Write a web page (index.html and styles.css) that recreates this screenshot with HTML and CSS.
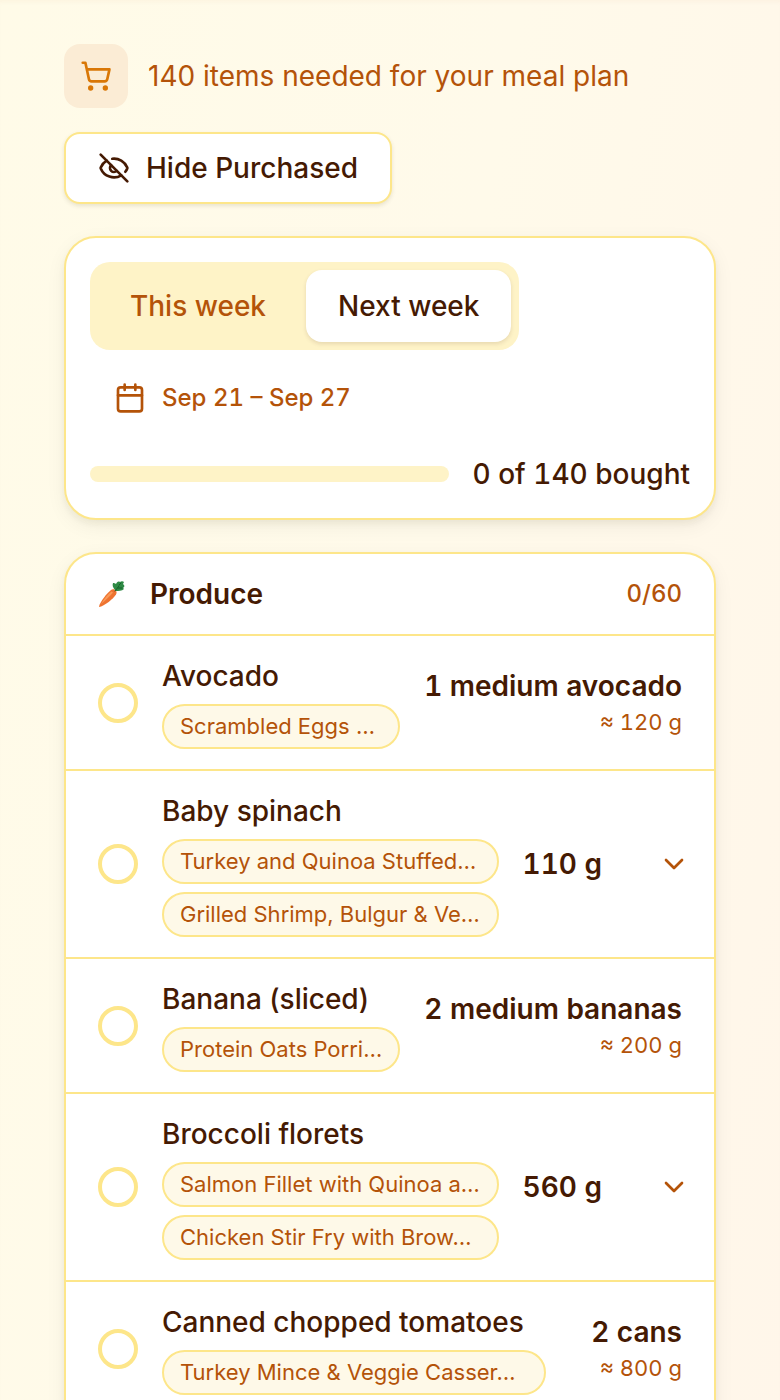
FILE: index.html
```html
<!DOCTYPE html>
<html lang="en">

<head>
  <meta charset="utf-8">
  <meta name="viewport" content="width=device-width, initial-scale=1">
  <title>Shopping list</title>
  <link rel="stylesheet" href="styles.css">
</head>

<body>
  <main class="page">
    <header class="intro">
      <span class="intro-icon">
        <svg class="icon" viewBox="0 0 24 24" aria-hidden="true">
          <circle cx="8" cy="21" r="1" />
          <circle cx="19" cy="21" r="1" />
          <path d="M2.05 2.05h2l2.66 12.42a2 2 0 0 0 2 1.58h9.78a2 2 0 0 0 1.95-1.57l1.65-7.43H5.12" />
        </svg>
      </span>
      <p>140 items needed for your meal plan</p>
    </header>

    <button class="hide-btn" type="button">
      <svg class="icon" viewBox="0 0 24 24" aria-hidden="true">
        <path d="M10.733 5.076a10.744 10.744 0 0 1 11.205 6.575 1 1 0 0 1 0 .696 10.747 10.747 0 0 1-1.444 2.49" />
        <path d="M14.084 14.158a3 3 0 0 1-4.242-4.242" />
        <path d="M17.479 17.499a10.75 10.75 0 0 1-15.417-5.151 1 1 0 0 1 0-.696 10.75 10.75 0 0 1 4.446-5.143" />
        <path d="m2 2 20 20" />
      </svg>
      Hide Purchased
    </button>

    <section class="card week-card">
      <div class="tabs">
        <button class="tab" type="button">This week</button>
        <button class="tab active" type="button">Next week</button>
      </div>
      <div class="dates">
        <svg class="icon" viewBox="0 0 24 24" aria-hidden="true">
          <path d="M8 2v4M16 2v4M3 10h18" />
          <rect x="3" y="4" width="18" height="18" rx="2" />
        </svg>
        <span>Sep 21 – Sep 27</span>
      </div>
      <div class="progress-row">
        <div class="progress" role="progressbar" aria-label="Items bought" aria-valuemin="0" aria-valuemax="140" aria-valuenow="0"></div>
        <span>0 of 140 bought</span>
      </div>
    </section>

    <section class="card list-card">
      <div class="group-head">
        <svg class="carrot" viewBox="0 0 28 28" aria-hidden="true">
          <path d="M1 26.500C2 22 9 13 13 10c3-2 7 1 5 4.500C15 19 7 25.500 1.500 27z" fill="#ee7330" />
          <path d="M3 24C6 19 10 14 13.500 11.500l1.500 1C12 16 8 20 3 24z" fill="#fa9a58" />
          <path d="M17 10c-2-2-3-5-2-7 1 0 2 0 3 1 1-2 2-3 4-2 1-1 3-1 4 0l-1 2c1 1 2 2 1 3-1 1-1 1 0 2-2 2-6 2-8 2z" fill="#2f8a45" />
          <path d="M17 11l4-5M21 5l2-2M20 8l4 0" stroke="#17622a" stroke-linecap="round" />
        </svg>
        <h2>Produce</h2>
        <span class="count">0/60</span>
      </div>

      <ul class="items">
        <li class="item">
          <input type="checkbox" id="avocado">
          <div class="info">
            <label for="avocado">Avocado</label>
            <span class="chip">Scrambled Eggs …</span>
          </div>
          <div class="amount">
            <strong>1 medium avocado</strong>
            <small>≈ 120 g</small>
          </div>
        </li>

        <li class="item">
          <input type="checkbox" id="spinach">
          <div class="info">
            <label for="spinach">Baby spinach</label>
            <span class="chip">Turkey and Quinoa Stuffed…</span>
            <span class="chip">Grilled Shrimp, Bulgur &amp; Ve…</span>
          </div>
          <div class="amount">
            <strong>110 g</strong>
          </div>
          <button class="expand" type="button" aria-label="Show details">
            <svg class="icon" viewBox="0 0 24 24" aria-hidden="true">
              <path d="m6 9 6 6 6-6" />
            </svg>
          </button>
        </li>

        <li class="item">
          <input type="checkbox" id="banana">
          <div class="info">
            <label for="banana">Banana (sliced)</label>
            <span class="chip">Protein Oats Porri…</span>
          </div>
          <div class="amount">
            <strong>2 medium bananas</strong>
            <small>≈ 200 g</small>
          </div>
        </li>

        <li class="item">
          <input type="checkbox" id="broccoli">
          <div class="info">
            <label for="broccoli">Broccoli florets</label>
            <span class="chip">Salmon Fillet with Quinoa a…</span>
            <span class="chip">Chicken Stir Fry with Brow…</span>
          </div>
          <div class="amount">
            <strong>560 g</strong>
          </div>
          <button class="expand" type="button" aria-label="Show details">
            <svg class="icon" viewBox="0 0 24 24" aria-hidden="true">
              <path d="m6 9 6 6 6-6" />
            </svg>
          </button>
        </li>

        <li class="item">
          <input type="checkbox" id="tomatoes">
          <div class="info">
            <label for="tomatoes">Canned chopped tomatoes</label>
            <span class="chip">Turkey Mince &amp; Veggie Casser…</span>
          </div>
          <div class="amount">
            <strong>2 cans</strong>
            <small>≈ 800 g</small>
          </div>
        </li>
      </ul>
    </section>
  </main>
</body>

</html>
```
FILE: styles.css
```css
* {
  box-sizing: border-box;
}

body {
  margin: 0;
  font-family: Inter, sans-serif;
  font-size: 28px;
  line-height: 40px;
  color: #451a03;
  background: linear-gradient(100deg, #fffbe8, #fffaea 50%, #fff6ea);
}

button {
  font: inherit;
  font-weight: 500;
  color: inherit;
  cursor: pointer;
}

.icon {
  width: 32px;
  height: 32px;
  flex-shrink: 0;
  fill: none;
  stroke: currentColor;
  stroke-width: 2;
  stroke-linecap: round;
  stroke-linejoin: round;
}

.page {
  display: flex;
  flex-direction: column;
  align-items: flex-start;
  gap: 32px;
  padding: 44px 64px;
  box-shadow: inset 0 4px 4px -2px rgba(180, 83, 9, 0.04);
}

.intro {
  display: flex;
  align-items: center;
  gap: 20px;
  margin-bottom: -8px;
  color: #b45309;
}

.intro p {
  margin: 0;
}

.intro-icon {
  display: flex;
  align-items: center;
  justify-content: center;
  width: 64px;
  height: 64px;
  border-radius: 16px;
  background: #fbecd5;
  color: #d97706;
}

.hide-btn {
  display: flex;
  align-items: center;
  gap: 16px;
  padding: 14px 32px;
  border: 2px solid #fde68a;
  border-radius: 16px;
  background: #fff;
  box-shadow: 0 2px 4px rgba(69, 60, 3, 0.12);
}

.card {
  width: 100%;
  border: 2px solid #fde68a;
  border-radius: 32px;
  background: #fff;
  box-shadow: 0 4px 6px rgba(40, 40, 20, 0.05), 0 6px 20px rgba(40, 40, 20, 0.06);
}

.week-card {
  padding: 24px;
}

.list-card {
  padding-bottom: 32px;
}

.tabs {
  display: flex;
  gap: 8px;
  width: fit-content;
  padding: 8px;
  border-radius: 20px;
  background: #fef3c7;
}

.tab {
  padding: 16px 32px;
  border: none;
  border-radius: 16px;
  background: none;
  color: #b45309;
}

.tab.active {
  background: #fff;
  color: #451a03;
  box-shadow: 0 2px 4px rgba(69, 26, 3, 0.12);
}

.dates {
  display: flex;
  align-items: center;
  gap: 16px;
  height: 64px;
  margin: 16px 0 24px;
  padding: 0 24px;
  font-size: 24px;
  font-weight: 500;
  font-variant-numeric: tabular-nums;
  color: #b45309;
}

.progress-row {
  display: flex;
  align-items: center;
  gap: 24px;
  font-weight: 500;
  font-variant-numeric: tabular-nums;
}

.progress {
  flex: 1;
  height: 16px;
  border-radius: 8px;
  background: #fef3c7;
}

.group-head {
  display: flex;
  align-items: center;
  gap: 24px;
  padding: 20px 32px;
}

.group-head h2 {
  flex: 1;
  margin: 0;
  font-size: 28px;
  font-weight: 600;
}

.carrot {
  width: 28px;
  height: 28px;
  fill: none;
}

.count {
  font-size: 24px;
  font-weight: 500;
  font-variant-numeric: tabular-nums;
  color: #b45309;
}

.items {
  margin: 0;
  padding: 0;
  list-style: none;
}

.item {
  display: flex;
  align-items: center;
  gap: 24px;
  padding: 20px 32px;
  border-top: 2px solid #fde68a;
}

.item input {
  appearance: none;
  flex-shrink: 0;
  width: 40px;
  height: 40px;
  margin: 0;
  border: 4px solid #fde68a;
  border-radius: 50%;
}

.item input:checked {
  background: #fde68a;
}

.info {
  flex: 1;
  display: flex;
  flex-direction: column;
  gap: 8px;
  min-width: 0;
}

.info label {
  font-weight: 500;
}

.chip {
  max-width: 384px;
  padding: 4px 16px;
  border: 2px solid #fde68a;
  border-radius: 24px;
  background: #fef9e8;
  color: #b45309;
  font-size: 22px;
  line-height: 33px;
  white-space: nowrap;
  overflow: hidden;
}

.amount {
  display: flex;
  flex-direction: column;
  align-items: flex-end;
  white-space: nowrap;
  font-variant-numeric: tabular-nums;
}

.amount strong {
  font-weight: 600;
}

.amount small {
  font-size: 22px;
  line-height: 33px;
  color: #b45309;
}

.expand {
  display: flex;
  align-items: center;
  justify-content: center;
  width: 64px;
  height: 64px;
  margin: 0 -24px 0 16px;
  padding: 0;
  border: none;
  background: none;
  color: #b45309;
}
```
